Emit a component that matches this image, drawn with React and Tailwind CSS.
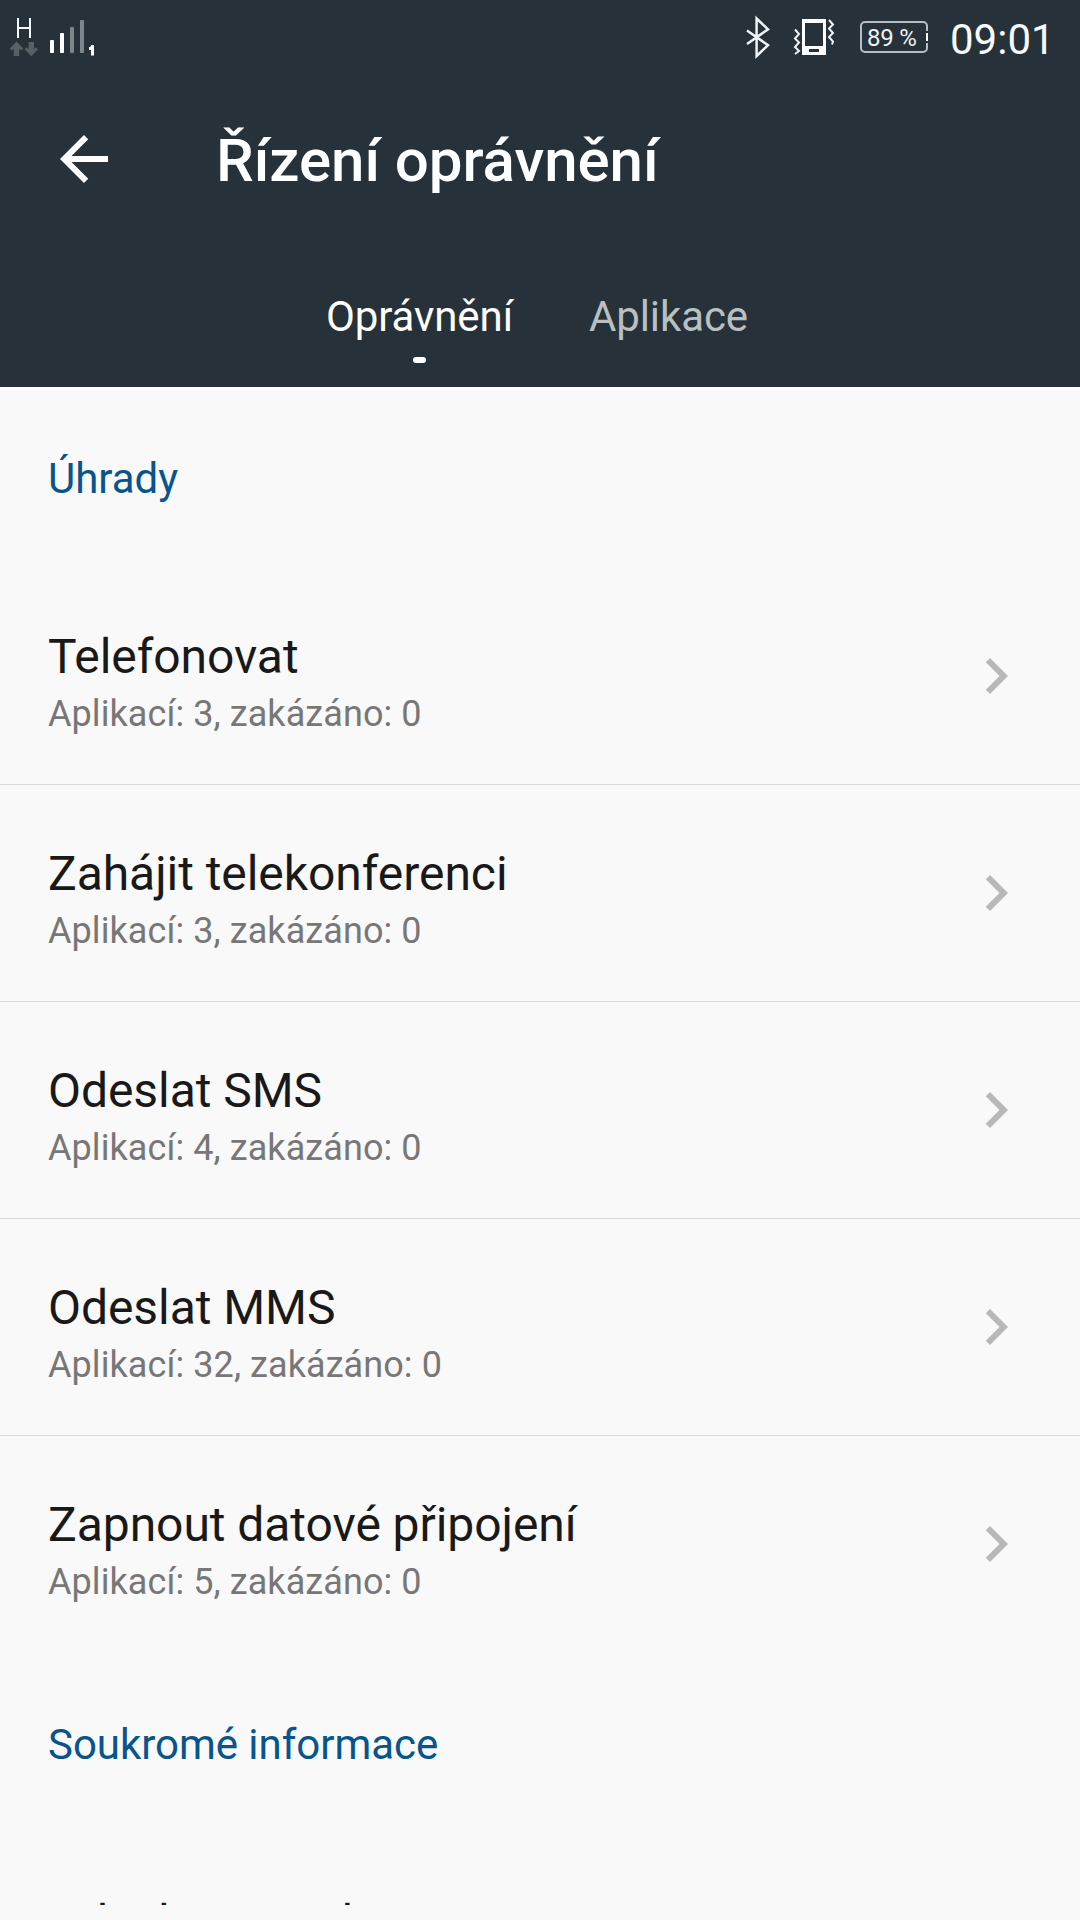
const sections = [
  {
    title: 'Úhrady',
    items: [
      { name: 'Telefonovat', apps: 3, denied: 0 },
      { name: 'Zahájit telekonferenci', apps: 3, denied: 0 },
      { name: 'Odeslat SMS', apps: 4, denied: 0 },
      { name: 'Odeslat MMS', apps: 32, denied: 0 },
      { name: 'Zapnout datové připojení', apps: 5, denied: 0 },
    ],
  },
  {
    title: 'Soukromé informace',
    items: [{ name: 'Odeslat e-mail' }],
  },
];

function SignalIcon() {
  return (
    <svg className="w-[120px] h-[78px] shrink-0" viewBox="0 0 120 78" fill="none">
      {/* Network type */}
      <path d="M18 18v20M30 18v20M18 28h12" stroke="#f5f8f9" strokeWidth="2" />
      <path d="M16.5 41.5l6.7 7-2 2-2-1.7V56h-5.4v-7.2l-2 1.7-2-2z" fill="#566166" />
      <path d="M31.3 56.3l-6.7-7 2-2 2 1.7v-7h5.4v7l2-1.7 2 2z" fill="#566166" />
      {/* Signal bars */}
      <rect x="50" y="40" width="4" height="13" rx="0.8" fill="#fff" />
      <rect x="60" y="33" width="4" height="20" rx="0.8" fill="#fff" />
      <rect x="70" y="27" width="4" height="26" rx="0.8" fill="#7d878a" />
      <rect x="80" y="20" width="4" height="33" rx="0.8" fill="#7d878a" />
      {/* SIM slot marker */}
      <path d="M94 45v10.5h-3V50h-2v-3c1.4 0 2-.6 2.3-2z" fill="#fff" />
    </svg>
  );
}

function BluetoothIcon() {
  return (
    <svg className="w-[26px] h-[78px] shrink-0" viewBox="745 0 26 78" fill="none" stroke="#eef3f5" strokeWidth="2.5">
      <path d="M747 30.5L768 45.2 756.6 56V18.5L768 29.3 747 44" />
    </svg>
  );
}

function VibrateIcon() {
  return (
    <svg className="w-[42px] h-[78px] shrink-0" viewBox="793 0 42 78" fill="none">
      <path fillRule="evenodd" d="M802 19h24v36h-24zM805 23v23h18V23zM809 49v3h10v-3z" fill="#fff" />
      <path d="M795 29.5l4 4.5-4 4.500 4 4-4 4.500 4 4-4 3" stroke="#eef3f5" strokeWidth="2" />
      <path d="M829 20l4 4.5-4 4 4 4.500-4 4 4 4.500-1 3" stroke="#eef3f5" strokeWidth="2" />
    </svg>
  );
}

function Battery({ level }) {
  return (
    <div className="relative w-[68px] h-8 rounded-[5px] border-2 border-[#b3bfc4]">
      <span className="block pl-[5px] pt-px text-[24px] leading-[28px] tracking-[-0.2px] text-[#eef3f4] whitespace-nowrap">
        {level} %
      </span>
      <span className="absolute -right-[2px] top-[8px] w-[2px] h-2 bg-white border-y-2 border-[#273139] box-content" />
    </div>
  );
}

function StatusBar() {
  return (
    <div className="flex items-center h-[78px]">
      <SignalIcon />
      <div className="ml-auto flex items-center">
        <BluetoothIcon />
        <div className="w-[22px]" />
        <VibrateIcon />
        <div className="w-[25px]" />
        <div className="pb-1">
          <Battery level={89} />
        </div>
        <span className="ml-[22px] w-[130px] pt-0.5 text-[42px] leading-[50px] text-[#f7fafa]">09:01</span>
      </div>
    </div>
  );
}

function Header() {
  return (
    <header className="h-[387px] bg-[#273139]">
      <StatusBar />
      <div className="flex items-center h-[162px] pl-12">
        <svg className="w-[72px] h-[72px]" viewBox="0 0 24 24" fill="#fff">
          <path d="M20 11H7.83l5.59-5.59L12 4l-8 8 8 8 1.41-1.41L7.83 13H20z" />
        </svg>
        <h1 className="ml-24 pt-1 text-[60px] leading-[72px] tracking-[-0.06px] font-medium text-[#fcfeff]">
          Řízení oprávnění
        </h1>
      </div>
      <nav className="flex pl-[326px] pt-[52px] text-[42px] leading-[50px] tracking-[-0.1px]">
        <div className="flex flex-col items-center">
          <span className="text-white">Oprávnění</span>
          <span className="mt-[15px] w-[13px] h-[6px] rounded-full bg-white" />
        </div>
        <span className="ml-[76px] text-[#b8c0c2]">Aplikace</span>
      </nav>
    </header>
  );
}

function PermissionRow({ item, last }) {
  return (
    <div className={`flex items-start justify-between h-[217px] px-12 border-b ${last ? 'border-transparent' : 'border-[#dcdcdc]'}`}>
      <div className="pt-[61px]">
        <p className="text-[48px] leading-[56px] tracking-[-0.06px] text-[#191919]">{item.name}</p>
        {item.apps !== undefined && (
          <p className="text-[36px] leading-[42px] mt-2 tracking-[0.08px] text-[#777777]">
            Aplikací: {item.apps}, zakázáno: {item.denied}
          </p>
        )}
      </div>
      <svg className="w-[72px] h-[72px] mt-[72px]" viewBox="0 0 24 24" fill="#b8b8b8">
        <path d="M10 6L8.59 7.41 13.17 12l-4.58 4.59L10 18l6-6z" />
      </svg>
    </div>
  );
}

export default function App() {
  return (
    <div className="w-[1080px] h-[1920px] overflow-hidden bg-[#f9f9f9] font-['Roboto',sans-serif]">
      <Header />
      <main className="h-[1518px] overflow-hidden border-t-[3px] border-white">
        {sections.map(section => (
          <section key={section.title} className="pb-[3px]">
            <h2 className="h-[178px] pl-12 pt-16 text-[42px] leading-[50px] tracking-[-0.03px] text-[#08548c]">{section.title}</h2>
            {section.items.map((item, i) => (
              <PermissionRow key={item.name} item={item} last={i === section.items.length - 1} />
            ))}
          </section>
        ))}
      </main>
    </div>
  );
}
